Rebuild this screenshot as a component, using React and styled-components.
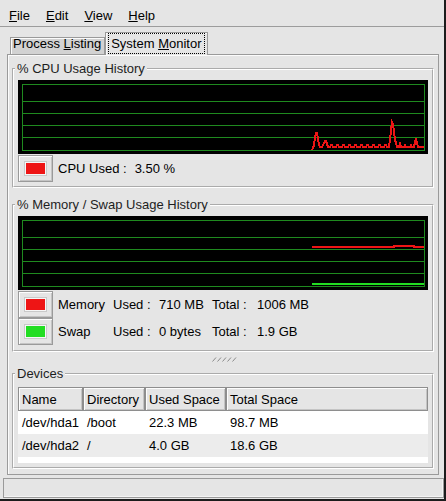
import styled, { createGlobalStyle } from "styled-components";

const GlobalStyle = createGlobalStyle`
  html, body {
    margin: 0;
    padding: 0;
    background: #e5e5e5;
  }
  body {
    font-family: "Liberation Sans", Arial, sans-serif;
    font-size: 13px;
    color: #000;
  }
`;

// chart origin is the top-left of the black box, traces were read off in page coords
const toChart = (pts, ox, oy) => pts.map(([x, y]) => `${x - ox},${y - oy}`).join(" ");

function buildCpuTrace() {
  const pts = [
    [312, 150], [313, 148], [314, 145], [315, 138], [316, 133], [317, 133],
    [318, 139], [319, 145], [320, 147], [322, 147], [323, 145], [324, 143],
    [325, 141], [326, 141], [327, 144], [328, 147],
  ];
  for (let x = 330; x <= 384; x += 6) {
    pts.push([x, 147], [x + 1, 145], [x + 2, 145], [x + 3, 147]);
  }
  pts.push(
    [388, 147], [389, 147], [390, 140], [391, 130], [392, 122], [393, 124],
    [394, 132], [395, 140], [396, 143], [397, 147], [399, 147], [400, 144],
    [401, 147], [404, 147], [405, 145], [406, 147], [410, 147], [411, 145],
    [412, 147], [414, 147], [415, 142], [416, 138], [417, 143], [418, 147],
    [424, 147]
  );
  return toChart(pts, 18, 80);
}

const cpuTrace = buildCpuTrace();
const memTrace = "294,31 376,31 376,29.5 396,29.5 396,31 406,31";
const swapTrace = "294,68 406,68";

const gridRows = [4.5, 21.5, 33.5, 45.5, 57.5, 70.5];

const devices = [
  { name: "/dev/hda1", dir: "/boot", used: "22.3 MB", total: "98.7 MB" },
  { name: "/dev/hda2", dir: "/", used: "4.0 GB", total: "18.6 GB" },
];

export default function App() {
  return (
    <>
      <GlobalStyle />
      <Window>
        <MenuBar>
          <MenuItem><u>F</u>ile</MenuItem>
          <MenuItem><u>E</u>dit</MenuItem>
          <MenuItem><u>V</u>iew</MenuItem>
          <MenuItem><u>H</u>elp</MenuItem>
        </MenuBar>

        <TabRow>
          <Tab>Process <u>L</u>isting</Tab>
          <Tab $active>
            <FocusRing>System <u>M</u>onitor</FocusRing>
          </Tab>
        </TabRow>

        <Notebook>
          <Frame>
            <FrameLabel>% CPU Usage History</FrameLabel>
            <FrameBody $top={4} $bottom={4}>
              <Graph>
                <polyline points={cpuTrace} fill="none" stroke="#ee1515" strokeWidth="2" />
              </Graph>
              <LegendRow>
                <ColorButton>
                  <Swatch $color="#ee1515" />
                </ColorButton>
                <span>CPU Used :</span>
                <Value>3.50 %</Value>
              </LegendRow>
            </FrameBody>
          </Frame>

          <Frame $gap={9}>
            <FrameLabel>% Memory / Swap Usage History</FrameLabel>
            <FrameBody $top={4} $bottom={5}>
              <Graph>
                <polyline points={memTrace} fill="none" stroke="#ee1515" strokeWidth="2" />
                <polyline points={swapTrace} fill="none" stroke="#22dd22" strokeWidth="2" />
              </Graph>
              <MemGrid>
                <ColorButton>
                  <Swatch $color="#ee1515" />
                </ColorButton>
                <span>Memory</span>
                <span>Used :</span>
                <span>710 MB</span>
                <span>Total :</span>
                <span>1006 MB</span>

                <ColorButton>
                  <Swatch $color="#22dd22" />
                </ColorButton>
                <span>Swap</span>
                <span>Used :</span>
                <span>0 bytes</span>
                <span>Total :</span>
                <span>1.9 GB</span>
              </MemGrid>
            </FrameBody>
          </Frame>

          <PaneHandle>
            <svg width="25" height="5" viewBox="0 0 25 5">
              {[0, 5, 10, 15, 20].map((x) => (
                <line key={x} x1={x + 0.5} y1="4.5" x2={x + 4} y2="0.5" stroke="#8a8a8a" strokeWidth="1" />
              ))}
            </svg>
          </PaneHandle>

          <Frame>
            <FrameLabel>Devices</FrameLabel>
            <FrameBody $top={6} $bottom={4}>
              <TableBox>
                <DeviceTable>
                  <colgroup>
                    <col style={{ width: 65 }} />
                    <col style={{ width: 62 }} />
                    <col style={{ width: 81 }} />
                    <col />
                  </colgroup>
                  <thead>
                    <tr>
                      <HeadCell>Name</HeadCell>
                      <HeadCell>Directory</HeadCell>
                      <HeadCell>Used Space</HeadCell>
                      <HeadCell>Total Space</HeadCell>
                    </tr>
                  </thead>
                  <tbody>
                    {devices.map((d, i) => (
                      <Row key={d.name} $odd={i % 2 === 1}>
                        <Cell>{d.name}</Cell>
                        <Cell>{d.dir}</Cell>
                        <Cell>{d.used}</Cell>
                        <Cell>{d.total}</Cell>
                      </Row>
                    ))}
                  </tbody>
                </DeviceTable>
              </TableBox>
            </FrameBody>
          </Frame>
        </Notebook>

        <StatusBar />
      </Window>
    </>
  );
}

function Graph({ children }) {
  return (
    <GraphSvg width="410" height="74" viewBox="0 0 410 74">
      <rect x="0" y="0" width="410" height="74" fill="#000" />
      {gridRows.map((y) => (
        <line key={y} x1="4" y1={y} x2="407" y2={y} stroke="#1f8a1f" strokeWidth="1" />
      ))}
      <line x1="4.5" y1="4.5" x2="4.5" y2="70.5" stroke="#1f8a1f" strokeWidth="1" />
      <line x1="406.5" y1="4.5" x2="406.5" y2="70.5" stroke="#1f8a1f" strokeWidth="1" />
      {children}
    </GraphSvg>
  );
}

const Window = styled.div`
  width: 446px;
  height: 501px;
  box-sizing: border-box;
  border-right: 2px solid #1c1c1c;
  border-bottom: 2px solid #1c1c1c;
  display: flex;
  flex-direction: column;
  background: #e5e5e5;
  overflow: hidden;
`;

const MenuBar = styled.div`
  display: flex;
  height: 27px;
  box-sizing: border-box;
  padding: 8px 0 0 1px;
  line-height: 15px;
  border-bottom: 1px solid #9c9c9c;
`;

const MenuItem = styled.div`
  padding: 0 8px;
`;

const TabRow = styled.div`
  display: flex;
  align-items: flex-end;
  height: 22px;
  margin: 5px 0 0 0;
  padding-left: 10px;
`;

const Tab = styled.div`
  position: relative;
  z-index: 1;
  box-sizing: border-box;
  border: 1px solid #9a9a9a;
  border-bottom: none;
  box-shadow: inset 1px 1px 0 #fbfbfb;
  background: ${(p) => (p.$active ? "#e5e5e5" : "#d2d2d2")};
  height: ${(p) => (p.$active ? "23px" : "17px")};
  margin-bottom: ${(p) => (p.$active ? "-1px" : "0")};
  padding: ${(p) => (p.$active ? "0 2px 1px 2px" : "0 3px 5px 2px")};
  line-height: ${(p) => (p.$active ? "15px" : "11px")};
  white-space: nowrap;
`;

const FocusRing = styled.div`
  border: 1px dotted #000;
  padding: 2px 2px;
  margin-top: 0;
`;

const Notebook = styled.div`
  height: 421px;
  box-sizing: border-box;
  margin: 0 5px 0 7px;
  padding: 6px 4px 0 4px;
  border: 1px solid #9a9a9a;
  box-shadow: inset 1px 1px 0 #fbfbfb;
  display: flex;
  flex-direction: column;
`;

const Frame = styled.fieldset`
  margin: ${(p) => p.$gap || 0}px 0 0 0;
  padding: 0;
  min-width: 0;
  border: 2px groove #fff;
`;

const FrameLabel = styled.legend`
  margin-left: 1px;
  padding: 0 2px;
  line-height: 15px;
  color: #1e1e1e;
`;

const FrameBody = styled.div`
  padding: ${(p) => p.$top}px 4px ${(p) => p.$bottom}px 4px;
  display: flex;
  flex-direction: column;
`;

const GraphSvg = styled.svg`
  display: block;
  shape-rendering: crispEdges;
`;

const LegendRow = styled.div`
  display: flex;
  align-items: center;
  gap: 5px;
  margin-top: 1px;
`;

const Value = styled.span`
  margin-left: 3px;
`;

const ColorButton = styled.div`
  width: 35px;
  height: 27px;
  box-sizing: border-box;
  border: 1px solid #9a9a9a;
  box-shadow: inset 1px 1px 0 #fdfdfd, inset -1px -1px 0 #c4c4c4;
  background: #e5e5e5;
  display: flex;
  align-items: center;
  justify-content: center;
`;

const Swatch = styled.div`
  width: 21px;
  height: 13px;
  box-sizing: border-box;
  border: 1px solid #f6f6f6;
  outline: 1px solid #c9c9c9;
  background: ${(p) => p.$color};
`;

const MemGrid = styled.div`
  display: grid;
  grid-template-columns: 40px 55px 46px 53px 45px 1fr;
  grid-auto-rows: 27px;
  align-items: center;
  margin-top: 1px;
  white-space: nowrap;
`;

const PaneHandle = styled.div`
  height: 14px;
  display: flex;
  align-items: center;
  justify-content: center;
  padding-left: 2px;
`;

const TableBox = styled.div`
  background: #fff;
  height: 76px;
`;

const DeviceTable = styled.table`
  width: 410px;
  table-layout: fixed;
  border-collapse: separate;
  border-spacing: 0;
  font-size: 13px;
`;

const HeadCell = styled.th`
  height: 24px;
  box-sizing: border-box;
  padding: 0 0 0 3px;
  text-align: left;
  font-weight: normal;
  background: #e5e5e5;
  border: 1px solid #8e8e8e;
  box-shadow: inset 1px 1px 0 #fdfdfd, inset -1px -1px 0 #c4c4c4;
  white-space: nowrap;
  overflow: hidden;
`;

const Row = styled.tr`
  background: ${(p) => (p.$odd ? "#ececec" : "#fff")};
`;

const Cell = styled.td`
  height: 23px;
  padding: 0 0 0 4px;
  white-space: nowrap;
  overflow: hidden;
`;

const StatusBar = styled.div`
  height: 20px;
  box-sizing: border-box;
  margin: 3px 0 0 3px;
  border: 1px solid #9a9a9a;
  box-shadow: inset -1px -1px 0 #f4f4f4;
`;
